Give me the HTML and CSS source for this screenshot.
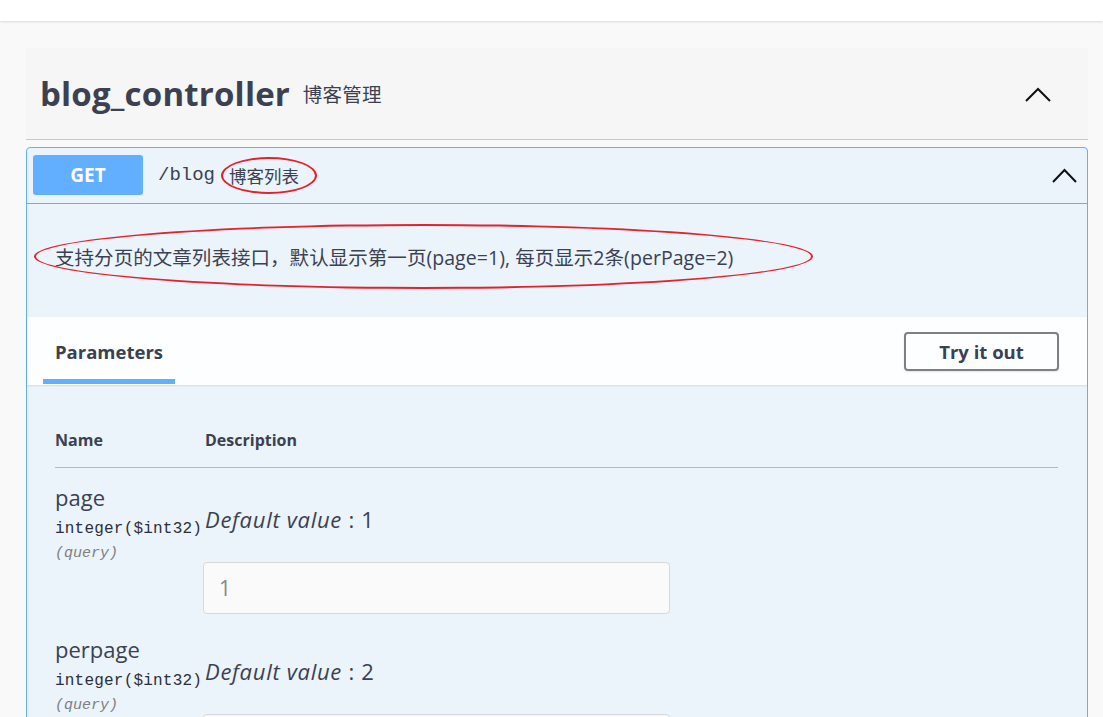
FILE: index.html
```html
<!DOCTYPE html>
<html lang="zh">
<head>
<meta charset="utf-8">
<title>blog_controller</title>
<link rel="stylesheet" href="styles.css">
</head>
<body>
<div class="topbar"></div>
<div class="wrapper">
  <div class="tag">
    <h3 class="tag-title">blog_controller <small class="tag-desc">博客管理</small></h3>
    <svg class="chev chev-tag" width="26" height="15" viewBox="0 0 26 15"><polyline points="1,14 13,2 25,14"/></svg>
  </div>
  <div class="opblock">
    <div class="summary">
      <span class="method">GET</span>
      <span class="path">/blog</span>
      <span class="summary-desc"><span class="circled">博客列表</span></span>
      <svg class="chev chev-op" width="25" height="15" viewBox="0 0 25 15"><polyline points="1,14 12.5,2 24,14"/></svg>
    </div>
    <div class="op-desc">
      <span class="circled-wide">支持分页的文章列表接口，默认显示第一页(page=1), 每页显示2条(perPage=2)</span>
    </div>
    <div class="section-header">
      <div class="tab">Parameters</div>
      <button class="try">Try it out</button>
    </div>
    <div class="params">
      <div class="row head">
        <div class="col-name">Name</div>
        <div class="col-desc">Description</div>
      </div>
      <div class="row param">
        <div class="col-name">
          <div class="p-name">page</div>
          <div class="p-type">integer<span class="p-fmt">($int32)</span></div>
          <div class="p-in">(query)</div>
        </div>
        <div class="col-desc">
          <div class="default"><i>Default value</i> : 1</div>
          <div class="input">1</div>
        </div>
      </div>
      <div class="row param">
        <div class="col-name">
          <div class="p-name">perpage</div>
          <div class="p-type">integer<span class="p-fmt">($int32)</span></div>
          <div class="p-in">(query)</div>
        </div>
        <div class="col-desc">
          <div class="default"><i>Default value</i> : 2</div>
          <div class="input">2</div>
        </div>
      </div>
    </div>
  </div>
</div>
</body>
</html>
```
FILE: styles.css
```css
html, body {
  margin: 0;
  padding: 0;
  background: #f9f9f9;
  font-family: "Open Sans", "Noto Sans CJK SC", sans-serif;
  color: #3b4151;
  overflow: hidden;
  height: 717px;
}

.topbar {
  height: 21px;
  background: #ffffff;
  box-shadow: 0 1px 2px rgba(0, 0, 0, 0.12);
}

.wrapper {
  padding: 27px 15px 0 26px;
}

.tag {
  display: flex;
  align-items: center;
  justify-content: space-between;
  height: 91px;
  padding: 0 37px 0 14px;
  background: #f6f6f6;
  border-bottom: 1px solid #c8c9cc;
}

.tag-title {
  margin: 1px 0 0;
  font-size: 33px;
  font-weight: 700;
  line-height: 44px;
  color: #3b4151;
  letter-spacing: 0.2px;
}

.tag-desc {
  font-size: 19.5px;
  font-weight: 400;
  margin-left: 4px;
  font-family: "Noto Sans CJK SC", sans-serif;
  vertical-align: 4px;
}

.chev polyline {
  fill: none;
  stroke: #111;
  stroke-width: 2;
}

.chev-tag {
  margin-top: 1px;
}

.opblock {
  margin-top: 7px;
  border: 1px solid #61affe;
  border-radius: 4px;
  background: #ebf3fb;
}

.summary {
  display: flex;
  align-items: center;
  padding: 7px 10px 8px 6px;
  border-bottom: 1px solid #61affe;
}

.method {
  width: 110px;
  height: 40px;
  line-height: 40px;
  text-align: center;
  background: #61affe;
  color: #ffffff;
  border-radius: 3px;
  font-size: 19px;
  font-weight: 700;
}

.path {
  margin-left: 15px;
  font-family: "Liberation Mono", monospace;
  font-size: 19px;
  color: #3b4151;
}

.summary-desc {
  margin-left: 14px;
  flex: 1;
  font-family: "Noto Sans CJK SC", sans-serif;
  font-size: 17.5px;
  color: #3b4151;
}

.circled {
  position: relative;
}

.circled::after {
  content: "";
  position: absolute;
  left: -8px;
  right: -18px;
  top: 50%;
  height: 33px;
  margin-top: -18px;
  border: 2px solid #e4222b;
  border-radius: 50%;
}

.op-desc {
  padding: 41px 28px 46px;
  font-size: 19.5px;
  line-height: 26px;
  color: #3b4151;
  letter-spacing: 0.05px;
}

.circled-wide {
  position: relative;
}

.circled-wide::after {
  content: "";
  position: absolute;
  left: -21px;
  right: -80px;
  top: 50%;
  height: 61px;
  margin-top: -34px;
  border: 2px solid #e4222b;
  border-radius: 50%;
}

.section-header {
  display: flex;
  align-items: center;
  justify-content: space-between;
  height: 68px;
  padding: 0 28px 0 16px;
  background: rgba(255, 255, 255, 0.85);
  box-shadow: 0 1px 2px rgba(0, 0, 0, 0.1);
}

.tab {
  align-self: stretch;
  display: flex;
  align-items: center;
  padding: 6px 12px 0;
  font-size: 18.5px;
  font-weight: 700;
  border-bottom: 5px solid #61affe;
  box-sizing: border-box;
  margin-bottom: 1px;
}

.try {
  width: 155px;
  height: 39px;
  padding: 0;
  border: 2px solid #808080;
  border-radius: 4px;
  background: transparent;
  box-shadow: 0 1px 2px rgba(0, 0, 0, 0.1);
  font-family: "Open Sans", sans-serif;
  font-size: 18.5px;
  font-weight: 700;
  color: #3b4151;
  margin-top: 1px;
}

.params {
  padding: 40px 29px 0 28px;
}

.row {
  display: grid;
  grid-template-columns: 150px 1fr;
}

.row.head {
  font-size: 16px;
  font-weight: 700;
  line-height: 30px;
  padding-bottom: 12px;
  border-bottom: 1px solid #b3b7c0;
}

.row.param {
  padding: 14px 0 6px;
}

.p-name {
  font-size: 22px;
  line-height: 30px;
}

.p-type {
  margin-top: 3px;
  font-family: "Liberation Mono", monospace;
  font-size: 16px;
  font-weight: 400;
  line-height: 28px;
  color: #2b2f3a;
  white-space: nowrap;
  letter-spacing: 0.2px;
}

.p-in {
  margin-top: 1px;
  font-family: "Liberation Mono", monospace;
  font-size: 15px;
  font-style: italic;
  line-height: 20px;
  color: #808080;
}

.param .col-desc {
  padding-top: 23px;
}

.default {
  font-size: 22px;
  line-height: 28px;
  letter-spacing: 0.7px;
}

.input {
  margin-top: 29px;
  margin-left: -2px;
  width: 467px;
  height: 52px;
  box-sizing: border-box;
  padding-left: 15px;
  background: #fafafa;
  border: 1px solid #d9d9d9;
  border-radius: 4px;
  font-size: 21px;
  line-height: 50px;
  color: #888;
  letter-spacing: 0;
}
```
